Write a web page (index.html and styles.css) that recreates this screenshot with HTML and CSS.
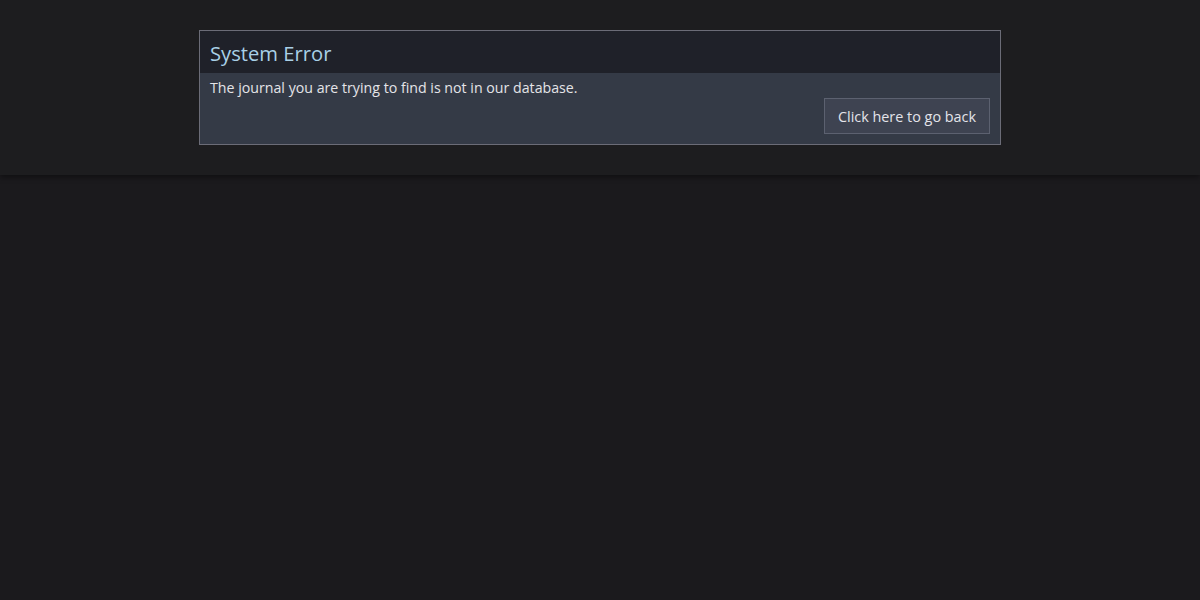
FILE: index.html
```html
<!DOCTYPE html>
<html lang="en">
<head>
<meta charset="utf-8">
<title>System Error</title>
<link rel="stylesheet" href="styles.css">
</head>
<body>
<header class="top">
  <section class="panel">
    <h1 class="panel-title">System Error</h1>
    <div class="panel-body">
      <p class="message">The journal you are trying to find is not in our database.</p>
      <div class="actions">
        <button class="back-btn" type="button">Click here to go back</button>
      </div>
    </div>
  </section>
</header>
</body>
</html>
```
FILE: styles.css
```css
html, body {
  margin: 0;
  padding: 0;
  background: #1b1a1d;
  font-family: "Open Sans", "Noto Sans", sans-serif;
  height: 100%;
}
.top {
  background: #1d1d1f;
  height: 175px;
  box-sizing: border-box;
  padding-top: 30px;
  box-shadow: 0 2px 6px rgba(0,0,0,0.45);
}
.panel {
  width: 802px;
  margin: 0 auto;
  box-sizing: border-box;
  border: 1px solid #6b6c77;
  background: #343a46;
}
.panel-title {
  margin: 0;
  background: #1f2129;
  color: #a9d0e6;
  font-weight: 400;
  font-size: 20.2px;
  line-height: 28px;
  padding: 8px 10px 6px;
}
.panel-body {
  padding: 5px 10px 10px;
}
.message {
  margin: 0;
  color: #e4e4e8;
  font-size: 14.2px;
  line-height: 20px;
}
.actions {
  display: flex;
  justify-content: flex-end;
}
.back-btn {
  background: #3e4351;
  border: 1px solid #5c6170;
  color: #e4e4ea;
  font-family: inherit;
  font-size: 14.4px;
  padding: 0 12px;
  height: 36px;
  width: 166px;
}
```
